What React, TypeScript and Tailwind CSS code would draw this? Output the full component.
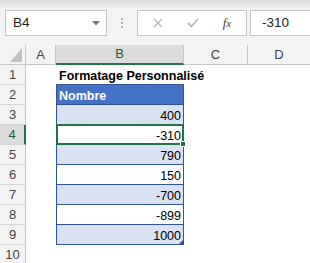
import React from "react";

const BLUE = "border-[#2f5597]";

type Row = { n: number; kind: "title" | "head" | "val" | "empty"; v?: string; band?: boolean; sel?: boolean; last?: boolean };

const rows: Row[] = [
  { n: 1, kind: "title" },
  { n: 2, kind: "head" },
  { n: 3, kind: "val", v: "400", band: true },
  { n: 4, kind: "val", v: "-310", band: false, sel: true },
  { n: 5, kind: "val", v: "790", band: true },
  { n: 6, kind: "val", v: "150", band: false },
  { n: 7, kind: "val", v: "-700", band: true },
  { n: 8, kind: "val", v: "-899", band: false },
  { n: 9, kind: "val", v: "1000", band: true, last: true },
  { n: 10, kind: "empty" },
];

function BCell({ r }: { r: Row }) {
  if (r.kind === "title") {
    return (
      <div className={`w-[128px] h-[20px] shrink-0 relative border-b ${BLUE} flex items-end`}>
        <span className="pl-[3px] pb-[1px] whitespace-nowrap font-bold text-[12.5px] leading-[14px] text-black">
          Formatage Personnalisé
        </span>
      </div>
    );
  }
  if (r.kind === "head") {
    return (
      <div className={`w-[128px] h-[20px] shrink-0 relative border-b border-l border-r ${BLUE} bg-[#4472c4] flex items-end`}>
        <span className="pl-[2px] pb-[1px] font-bold text-[12.5px] leading-[14px] text-white">Nombre</span>
      </div>
    );
  }
  if (r.kind === "val") {
    return (
      <div
        className={`w-[128px] h-[20px] shrink-0 relative border-b border-l border-r ${BLUE} ${
          r.band ? "bg-[#d9e1f2]" : "bg-white"
        } flex items-end justify-end`}
      >
        <span className="pr-[2px] pb-[1px] text-[12.5px] leading-[14px] text-black">{r.v}</span>
        {r.sel && (
          <>
            <div className="absolute -top-[1px] -left-[1px] right-[-1px] -bottom-[1px] border-2 border-[#217346] z-10" />
            <div className="absolute right-[-3px] bottom-[-3px] w-[6px] h-[6px] bg-[#217346] border border-white z-20" />
          </>
        )}
        {r.last && (
          <svg className="absolute right-0 bottom-0" width="4" height="4" viewBox="0 0 4 4">
            <polygon points="4,0 4,4 0,4" fill="#2f5597" />
          </svg>
        )}
      </div>
    );
  }
  return <div className="w-[128px] h-[20px] shrink-0" />;
}

export default function App() {
  return (
    <div
      className="w-[310px] h-[263px] overflow-hidden bg-white flex flex-col"
      style={{ fontFamily: '"Liberation Sans", Arial, sans-serif' }}
    >
      {/* toolbar */}
      <div className="h-[45px] shrink-0 bg-[#f3f3f3] flex flex-col">
        <div className="h-[8px] bg-gradient-to-b from-[#dedede] to-[#eeeeee]" />
        <div className="flex pt-[2px]">
          <div className="ml-[5px] w-[102px] h-[26px] bg-white border border-[#c6c6c6] flex items-center justify-between pl-[7px] pr-[6px]">
            <span className="text-[13.5px] text-[#222]">B4</span>
            <svg width="8" height="5" viewBox="0 0 8 5">
              <polygon points="0,0 8,0 4,4.5" fill="#777" />
            </svg>
          </div>
          <div className="w-[30px] flex flex-col items-center justify-center gap-[2px]">
            <div className="w-[2px] h-[2px] bg-[#b5b5b5]" />
            <div className="w-[2px] h-[2px] bg-[#b5b5b5]" />
            <div className="w-[2px] h-[2px] bg-[#b5b5b5]" />
          </div>
          <div className="w-[110px] h-[26px] bg-white border border-[#c6c6c6] flex items-center">
            <div className="w-[40px] flex justify-center">
              <svg width="10" height="10" viewBox="0 0 10 10">
                <path d="M1 1 L9 9 M9 1 L1 9" stroke="#b8b8b8" strokeWidth="1.4" />
              </svg>
            </div>
            <div className="w-[30px] flex justify-center">
              <svg width="12" height="10" viewBox="0 0 12 10">
                <path d="M1 5 L4.5 8.5 L11 1" stroke="#b8b8b8" strokeWidth="1.8" fill="none" />
              </svg>
            </div>
            <div className="flex-1 flex justify-center">
              <span
                className="italic text-[13px] text-[#444]"
                style={{ fontFamily: '"Liberation Serif", "Times New Roman", serif' }}
              >
                f<span className="text-[11px]">x</span>
              </span>
            </div>
          </div>
          <div className="ml-[3px] flex-1 h-[26px] bg-white border border-[#c6c6c6] border-r-0 flex items-center pl-[11px]">
            <span className="text-[13.5px] text-[#222]">-310</span>
          </div>
        </div>
      </div>

      {/* column headers */}
      <div className="h-[20px] shrink-0 flex bg-[#f3f3f3] text-[13px] text-[#444]">
        <div className="w-[26px] shrink-0 border-r border-b border-[#c6c6c6] relative">
          <svg className="absolute left-[10px] top-[3px]" width="12" height="14" viewBox="0 0 12 14">
            <polygon points="12,0 12,14 0,14" fill="#c2c2c2" />
          </svg>
        </div>
        <div className="w-[30px] shrink-0 border-r border-b border-[#c6c6c6] flex items-center justify-center">A</div>
        <div className="w-[128px] shrink-0 border-r border-[#c6c6c6] border-b-2 border-b-[#217346] bg-[#dcdcdc] flex items-center justify-center text-[#1f5c38]">
          B
        </div>
        <div className="w-[64px] shrink-0 border-r border-b border-[#c6c6c6] flex items-center justify-center">C</div>
        <div className="flex-1 border-b border-[#c6c6c6] flex items-center justify-center">D</div>
      </div>

      {/* rows */}
      {rows.map((r) => (
        <div key={r.n} className="h-[20px] shrink-0 flex">
          <div
            className={`w-[26px] shrink-0 border-b border-[#d4d4d4] flex items-center justify-center text-[13px] ${
              r.sel
                ? "bg-[#dcdcdc] text-[#1f5c38] border-r-2 border-r-[#217346]"
                : "bg-[#f3f3f3] text-[#444] border-r border-r-[#c6c6c6]"
            }`}
          >
            {r.n}
          </div>
          <div className="w-[30px] shrink-0" />
          <BCell r={r} />
          <div className="w-[64px] shrink-0" />
          <div className="flex-1" />
        </div>
      ))}
    </div>
  );
}
